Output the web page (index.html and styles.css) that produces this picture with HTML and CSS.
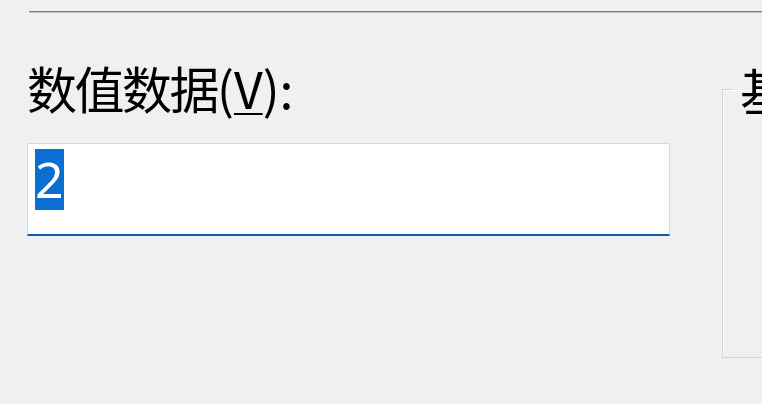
FILE: index.html
```html
<!DOCTYPE html>
<html lang="zh-CN">
<head>
<meta charset="utf-8">
<title>编辑 DWORD 值</title>
<link rel="stylesheet" href="styles.css">
</head>
<body>
<div class="dialog">
  <div class="topline"></div>
  <div class="content">
    <div class="left">
      <div class="label"><span class="cjk">数值数据</span>(<span class="key">V</span>):</div>
      <div class="input"><span class="sel">2</span></div>
    </div>
    <fieldset class="group">
      <legend class="group-title">基数</legend>
    </fieldset>
  </div>
</div>
</body>
</html>
```
FILE: styles.css
```css
html, body {
  margin: 0;
  padding: 0;
  overflow: hidden;
  background: #f0f0f0;
}
.dialog {
  width: 762px;
  height: 404px;
  overflow: hidden;
  background: #f0f0f2;
  font-family: "Noto Sans CJK SC", "Noto Sans", sans-serif;
  color: #000;
}
.topline {
  margin: 11px 0 0 29px;
  height: 0;
  border-top: 1px solid #7c7c7c;
  border-bottom: 1px solid #c4c4c4;
}
.content {
  display: flex;
  gap: 52px;
  padding-left: 27px;
  margin-top: 45px;
}
.left {
  width: 643px;
  flex: none;
}
.label {
  font-size: 50px;
  line-height: 58px;
  height: 58px;
  white-space: nowrap;
}
.cjk {
  letter-spacing: -2.5px;
}
.key {
  text-decoration: underline;
  text-decoration-thickness: 2px;
  text-underline-offset: 4px;
}
.input {
  margin-top: 27px;
  height: 93px;
  box-sizing: border-box;
  background: #fff;
  border: 1px solid #d9d9d9;
  border-bottom: 2px solid #0f5fae;
  padding: 5px 0 0 7px;
}
.sel {
  display: inline-block;
  height: 61px;
  line-height: 61px;
  font-family: "Noto Sans", sans-serif;
  font-size: 50px;
  background: #0a6fd0;
  color: #fff;
}
.group {
  flex: none;
  width: 200px;
  height: 298px;
  margin: 0;
  margin-top: 2px;
  padding: 0;
  box-sizing: border-box;
  border: 1px solid #d4d4d4;
  box-shadow: inset 1px 1px 0 #fbfbfb;
}
.group-title {
  margin-left: 9px;
  padding: 0 8px;
  font-size: 50px;
  line-height: 58px;
  letter-spacing: -2.5px;
  white-space: nowrap;
}
```
